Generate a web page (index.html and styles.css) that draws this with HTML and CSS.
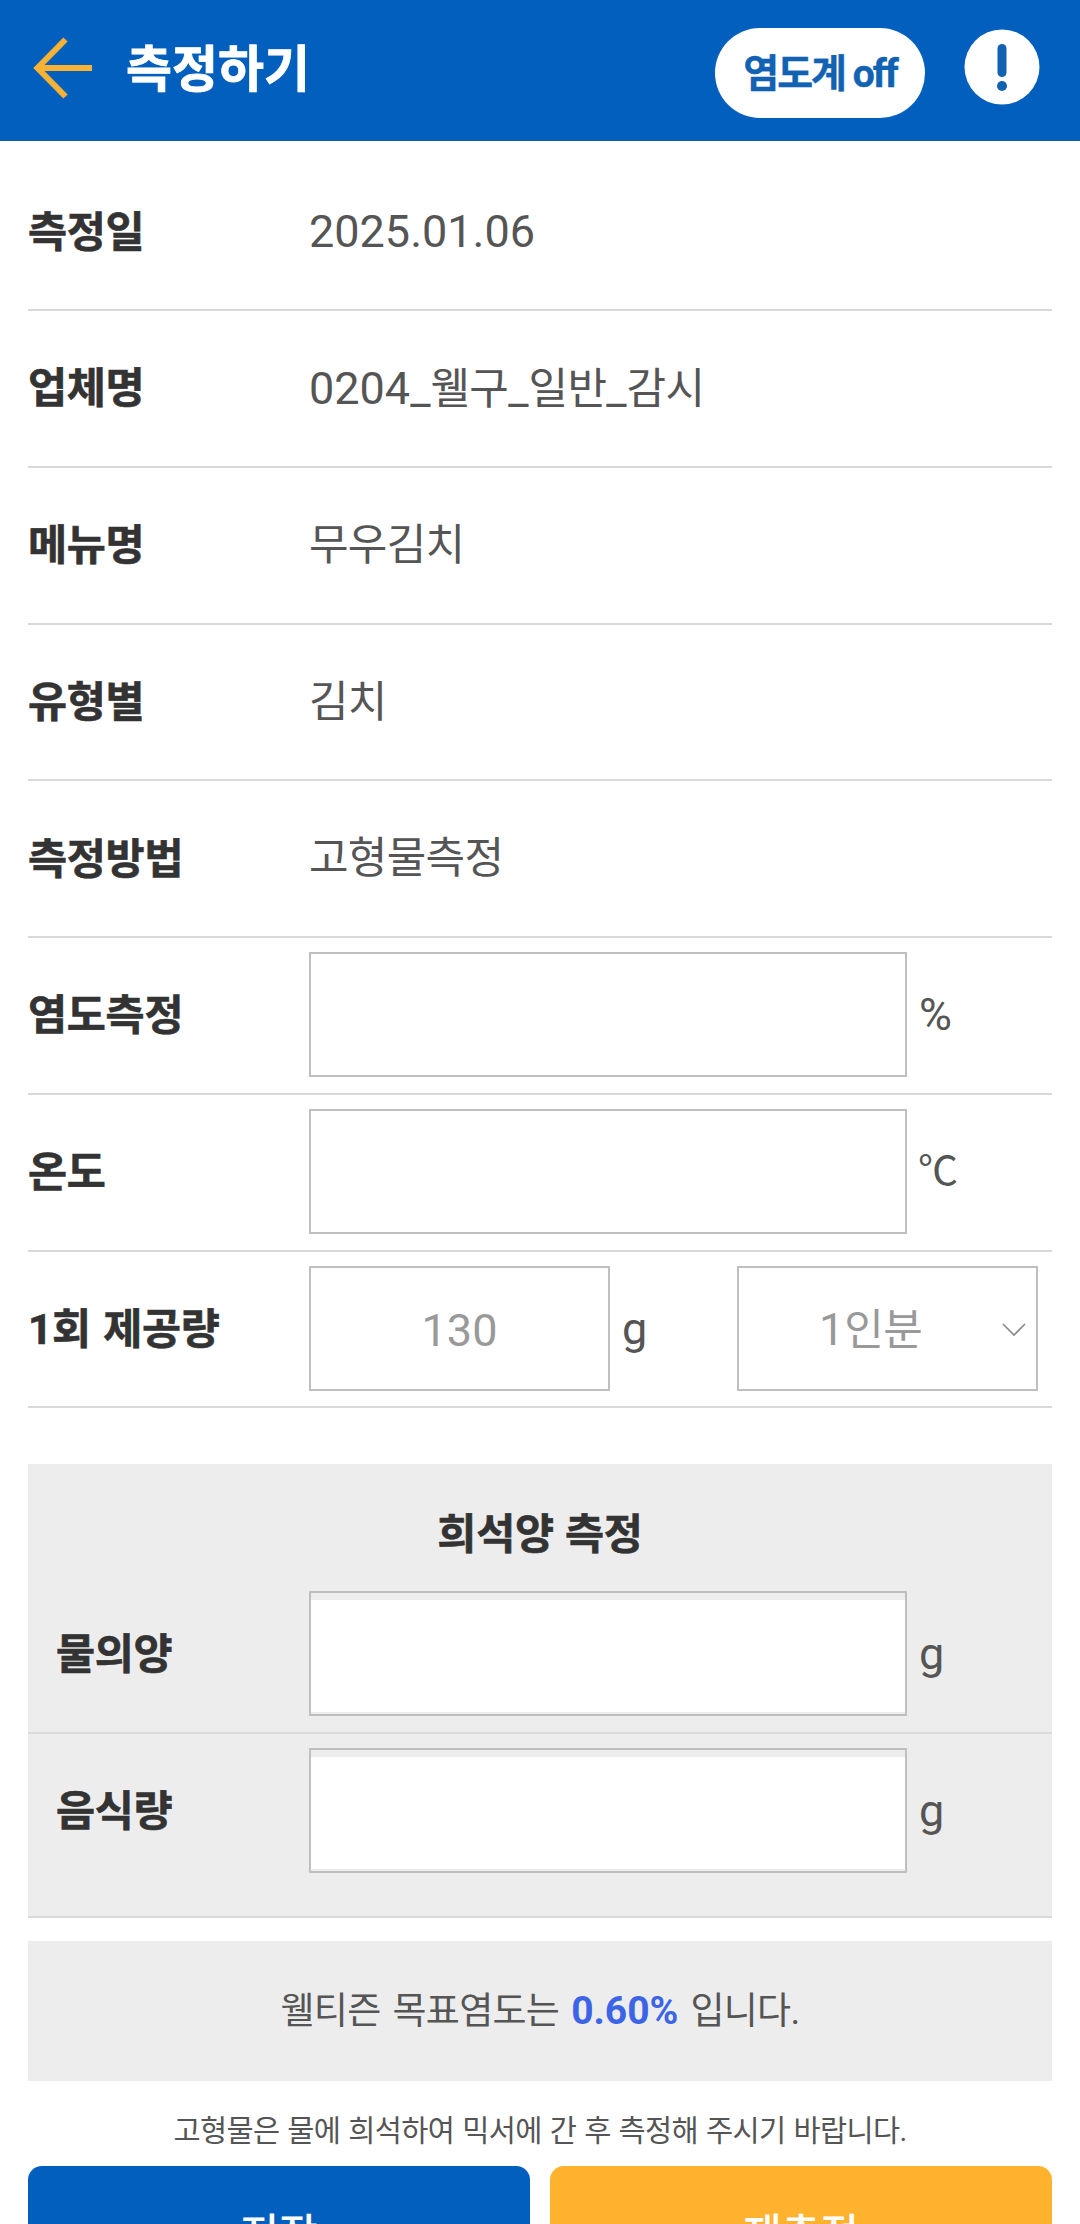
FILE: index.html
```
<!DOCTYPE html>
<html lang="ko">
<head>
    <meta charset="UTF-8">
    <title>측정하기</title>
    <meta name="viewport" content="width=device-width, initial-scale=1">
    <link rel="stylesheet" href="styles.css">
</head>
<body>
<header class="header">
    <a href="#" class="back">
        <svg width="60" height="64" viewBox="0 0 60 64"><path d="M32.500 3.500L4.500 32L32.500 60.500M4.500 32H59" fill="none" stroke="#f9b233" stroke-width="6"/></svg>
    </a>
    <h1>측정하기</h1>
    <button class="sensor">염도계 off</button>
    <a href="#" class="info">
        <svg width="76" height="76" viewBox="0 0 76 76"><circle cx="38" cy="38" r="37.500" fill="#fff"/><path d="M38 19.500V43.500" stroke="#1262b3" stroke-width="9" stroke-linecap="round"/><circle cx="38" cy="57" r="5" fill="#1262b3"/></svg>
    </a>
</header>
<div class="container">
    <ul class="list">
        <li><strong>측정일</strong><span class="num">2025.01.06</span></li>
        <li><strong>업체명</strong><span><i class="num">0204_</i>웰구<i class="num">_</i>일반<i class="num">_</i>감시</span></li>
        <li><strong>메뉴명</strong><span>무우김치</span></li>
        <li><strong>유형별</strong><span>김치</span></li>
        <li><strong>측정방법</strong><span>고형물측정</span></li>
        <li><strong>염도측정</strong><input type="text" class="long"><em>%</em></li>
        <li><strong>온도</strong><input type="text" class="long"><em class="deg">℃</em></li>
        <li>
            <strong>1회 제공량</strong><input type="text" class="short" value="130"><em>g</em>
            <div class="select">
                <span><i class="num">1</i>인분</span>
                <svg width="24" height="14" viewBox="0 0 24 14"><path d="M1 1L12 12L23 1" fill="none" stroke="#888" stroke-width="1.600"/></svg>
            </div>
        </li>
    </ul>
    <div class="dilute">
        <h2>희석양 측정</h2>
        <ul>
            <li><strong>물의양</strong><input type="text" class="long"><em>g</em></li>
            <li><strong>음식량</strong><input type="text" class="long"><em>g</em></li>
        </ul>
    </div>
    <p class="target">웰티즌 목표염도는 <b>0.60%</b> 입니다.</p>
    <p class="guide">고형물은 물에 희석하여 믹서에 간 후 측정해 주시기 바랍니다.</p>
    <div class="btns">
        <button class="save">저장</button>
        <button class="retry">재측정</button>
    </div>
</div>
</body>
</html>
```
FILE: styles.css
```
*{ margin:0; padding:0; box-sizing:border-box; }
html, body{ height:2224px; overflow:hidden; }
body{ font:45px/1.2 Roboto, "Noto Sans CJK KR", sans-serif; color:#555; background:#fff; }
ul, li{ list-style:none; }
a{ text-decoration:none; }
i, em{ font-style:normal; }
svg{ display:block; }
input, button{ font-family:inherit; border:0; outline:0; }

.header{ display:flex; height:141px; padding:0 40px 0 33px; background:#035fbd; border-bottom:1px solid #1a5a9c; }
.back{ margin-top:36px; }
.header h1{ flex:1; margin:37px 0 0 33px; font-size:50px; line-height:66px; font-weight:700; color:#fff; -webkit-text-stroke:.8px #fff; }
.sensor{ width:210px; height:90px; margin-top:28px; padding-bottom:6px; border-radius:45px; background:#fff; color:#1262b3; font-size:39px; font-weight:700; letter-spacing:-2px; -webkit-text-stroke:.4px #1262b3; }
.info{ margin:29px 0 0 39px; }

.container{ padding:13px 28px 0; }
.list li, .dilute li{ display:flex; align-items:center; height:156.750px; border-bottom:2px solid #d9d9d9; }
.list li:first-child{ height:157px; }
strong{ width:281px; padding-top:1px; font-size:42.500px; font-weight:700; color:#333; letter-spacing:-.3px; word-spacing:2px; white-space:nowrap; -webkit-text-stroke:.6px #333; }
li span{ padding-top:1px; font-size:43px; letter-spacing:-.7px; }
li .num{ padding-top:0; font-size:45px; letter-spacing:0; }
.list input, .dilute input, .select{ height:125px; margin-bottom:1px; border:2px solid #bfbfbf; background:#fff; font-size:45px; color:#999; text-align:center; }
.list input{ padding-top:4px; }
.long{ width:598px; }
.short{ width:301px; }
em{ margin-left:12px; }
em.deg{ margin-left:11px; font-size:40px; }
.select{ display:flex; align-items:center; justify-content:space-between; width:301px; margin:0 14px 1px auto; padding:3px 10px 0 80px; }

.dilute{ margin-top:56px; height:454px; background:#ededed; border-bottom:2px solid #d9d9d9; }
.dilute h2{ height:113px; padding-top:38px; font-size:42.500px; line-height:66px; color:#333; text-align:center; letter-spacing:-.3px; word-spacing:1px; -webkit-text-stroke:.6px #333; }
.dilute li{ padding-bottom:1px; }
.dilute li:last-child{ padding-bottom:3px; border-bottom:0; }
.dilute strong{ padding-left:28px; }
.dilute input{ box-shadow:inset 0 7px #ededed, inset 0 -2px #ededed; }

.target{ height:140px; margin-top:23px; background:#ededed; font-size:37px; line-height:140px; text-align:center; letter-spacing:-.7px; word-spacing:3.500px; }
.target b{ font-size:39px; color:#3c64e6; letter-spacing:0; }
.guide{ height:85px; font-size:29.500px; line-height:100px; text-align:center; letter-spacing:-.65px; word-spacing:1.300px; }
.btns{ display:flex; gap:20px; }
.btns button{ flex:1; height:129px; border-radius:14px; font-size:42px; font-weight:500; color:#fff; }
.save{ background:#035fbd; }
.retry{ background:#ffb22e; }
```
